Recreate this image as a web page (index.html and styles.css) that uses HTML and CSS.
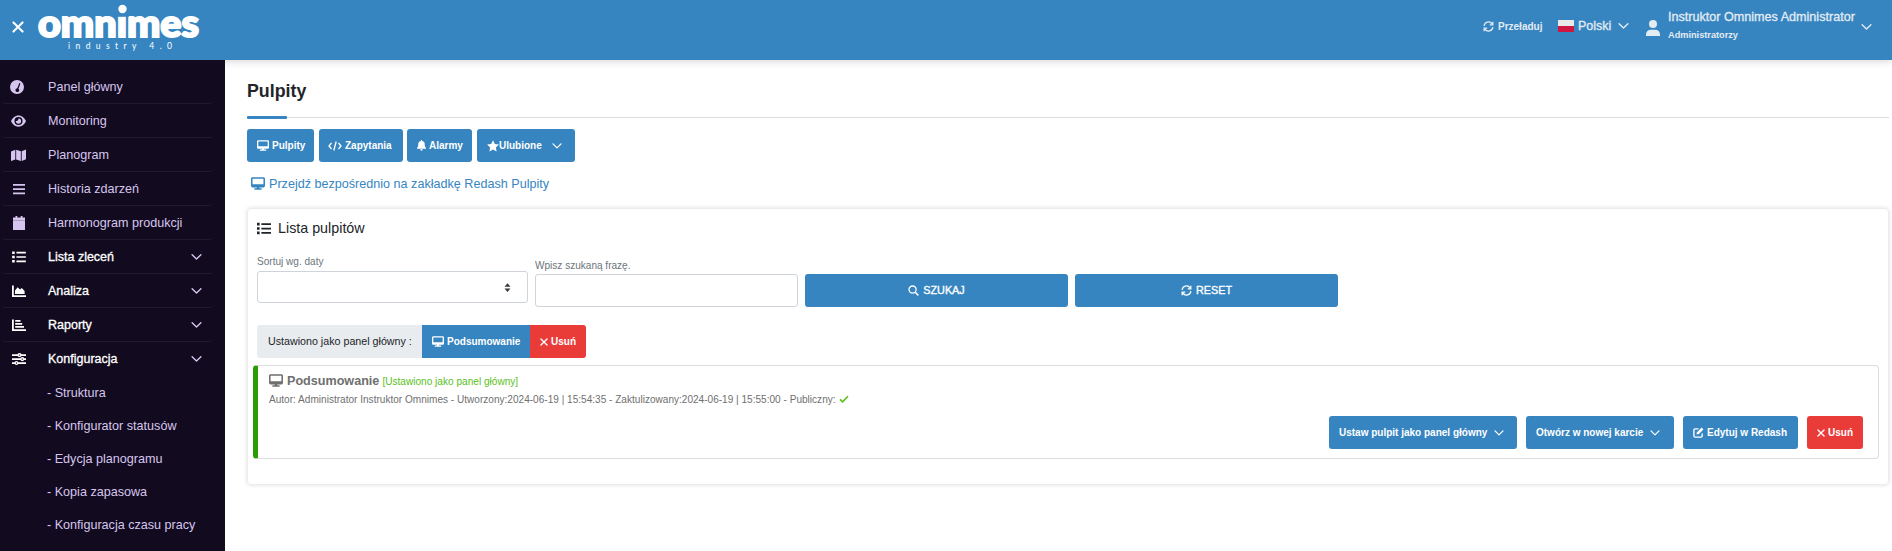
FILE: index.html
```html
<!DOCTYPE html>
<html lang="pl">
<head>
<meta charset="utf-8">
<title>Omnimes - Pulpity</title>
<link rel="stylesheet" href="styles.css">
</head>
<body>
<svg class="defs" aria-hidden="true">
  <symbol id="desktop" viewBox="0 0 576 512"><path d="M64 0C28.700 0 0 28.700 0 64V352c0 35.300 28.700 64 64 64H240l-10.700 32H160c-17.700 0-32 14.300-32 32s14.300 32 32 32H416c17.700 0 32-14.300 32-32s-14.300-32-32-32H346.700L336 416H512c35.300 0 64-28.700 64-64V64c0-35.300-28.700-64-64-64H64zM512 64V288H64V64H512z"/></symbol>
  <symbol id="list" viewBox="0 0 16 14"><path d="M0 .5h3v3H0zM0 5.500h3v3H0zM0 10.500h3v3H0zM5 1h11v2H5zM5 6h11v2H5zM5 11h11v2H5z"/></symbol>
  <symbol id="down" viewBox="0 0 12 8"><path d="M1.200 1.500 6 6.300l4.800-4.800" fill="none" stroke="currentColor" stroke-width="1.500" stroke-linecap="round" stroke-linejoin="round"/></symbol>
  <symbol id="times" viewBox="0 0 10 10"><path d="M1.200 1.200l7.600 7.600M8.800 1.200 1.200 8.800" fill="none" stroke="currentColor" stroke-width="1.700" stroke-linecap="round"/></symbol>
  <symbol id="sync" viewBox="0 0 12 12"><path d="M1.200 5.300A4.800 4.800 0 0 1 9.800 3M10.800 6.700A4.800 4.800 0 0 1 2.200 9M10.700.8v3.400H7.400M1.300 11.200V7.800h3.300" fill="none" stroke="currentColor" stroke-width="1.400"/></symbol>
</svg>

<header class="topbar">
  <svg class="close"><use href="#times"/></svg>
  <svg class="logo" viewBox="0 0 170 60">
    <text class="logo-name" x="3" y="36.500" textLength="161" lengthAdjust="spacingAndGlyphs">omnimes</text>
    <path class="logo-gap" d="M81 3h13v13.800H81z"/>
    <circle cx="87.500" cy="9" r="4.200"/>
    <text class="logo-sub" x="33" y="48.500" textLength="104">industry 4.0</text>
  </svg>
  <div class="reload"><svg><use href="#sync"/></svg><span>Przeładuj</span></div>
  <div class="lang"><i class="flag"></i><span>Polski</span><svg class="chev"><use href="#down"/></svg></div>
  <div class="user">
    <svg class="avatar" viewBox="0 0 14 16"><circle cx="7" cy="4" r="4"/><path d="M0 16v-1.500C0 11.500 2 9.700 5 9.700h4c3 0 5 1.800 5 4.800V16z"/></svg>
    <div><div class="user-name">Instruktor Omnimes Administrator</div><div class="user-role">Administratorzy</div></div>
    <svg class="chev"><use href="#down"/></svg>
  </div>
</header>

<div class="shell">
<nav class="sidebar">
  <a class="nav"><svg viewBox="0 0 14 14"><path fill-rule="evenodd" d="M7 0a7 7 0 1 0 0 14A7 7 0 0 0 7 0zM9.300 3l1.100.5-1.900 5.200a1.900 1.900 0 1 1-1.200-.4z"/></svg><span>Panel główny</span></a>
  <a class="nav"><svg class="wide" viewBox="0 0 16 14"><path fill-rule="evenodd" d="M8 1C4.200 1 1.500 3.700 0 7c1.500 3.300 4.200 6 8 6s6.500-2.700 8-6c-1.500-3.300-4.200-6-8-6zm0 1.700a4.300 4.300 0 1 1 0 8.600 4.300 4.300 0 0 1 0-8.600zm0 1.500c0 1.600-1.200 2.800-2.800 2.800a2.800 2.800 0 1 0 2.800-2.800z"/></svg><span>Monitoring</span></a>
  <a class="nav"><svg class="wide" viewBox="0 0 16 14"><path d="M0 3.200 4.600 1.400v10.300L0 13.400zM5.500 1.400l5 1.700v10.300l-5-1.700zM11.400 3.100 16 1.200v10.400l-4.600 1.800z"/></svg><span>Planogram</span></a>
  <a class="nav"><svg class="bars" viewBox="0 0 12 12"><path d="M0 1h12v1.700H0zM0 5.200h12v1.700H0zM0 9.500h12v1.700H0z"/></svg><span>Historia zdarzeń</span></a>
  <a class="nav"><svg class="bars" viewBox="0 0 12 14"><path d="M2.500 0h1.800v1.500h3.400V0h1.800v1.500H12v2.700H0V1.500h2.500z"/><path d="M0 4h12v1H0z" opacity=".7"/><path d="M0 5h12v9H0z"/></svg><span>Harmonogram produkcji</span></a>
  <a class="nav group"><svg class="listicon"><use href="#list"/></svg><span>Lista zleceń</span><svg class="chev"><use href="#down"/></svg></a>
  <a class="nav group"><svg viewBox="0 0 14 12"><path d="M0 .5h1.800v9.700H14V12H0zM3 9V5.500l2.700-3.300L8 4.500 9.800 3 12.600 6v3z"/></svg><span>Analiza</span><svg class="chev"><use href="#down"/></svg></a>
  <a class="nav group"><svg viewBox="0 0 14 12"><path d="M0 .5h1.800v9.700H14V12H0zM3.200 1h5.300v1.700H3.200zM3.200 4h7v1.700h-7zM3.200 7H12v1.700H3.200z"/></svg><span>Raporty</span><svg class="chev"><use href="#down"/></svg></a>
  <a class="nav group last"><svg viewBox="0 0 14 12"><path d="M0 1.300h14v1.600H0zM0 5.300h14v1.600H0zM0 9.300h14v1.600H0z"/><circle cx="7.500" cy="2.100" r="2.100"/><circle cx="10.300" cy="6.100" r="2.100"/><circle cx="4.500" cy="10" r="2"/><g fill="#120a1e"><circle cx="7.500" cy="2.100" r=".7"/><circle cx="10.300" cy="6.100" r=".7"/><circle cx="4.500" cy="10" r=".7"/></g></svg><span>Konfiguracja</span><svg class="chev"><use href="#down"/></svg></a>
  <a class="sub">- Struktura</a>
  <a class="sub">- Konfigurator statusów</a>
  <a class="sub">- Edycja planogramu</a>
  <a class="sub">- Kopia zapasowa</a>
  <a class="sub">- Konfiguracja czasu pracy</a>
</nav>

<main class="main">
  <h1>Pulpity</h1>
  <div class="rule"><i></i></div>
  <div class="tabs">
    <a class="btn t1"><svg class="desk"><use href="#desktop"/></svg><span>Pulpity</span></a>
    <a class="btn t2"><svg class="code" viewBox="0 0 14 10"><path d="M3.500 2 1 5l2.500 3M10.500 2 13 5l-2.500 3M8.200.5 5.800 9.500" fill="none" stroke="currentColor" stroke-width="1.300"/></svg><span>Zapytania</span></a>
    <a class="btn t3"><svg class="bell" viewBox="0 0 10 12"><path d="M4.300 0h1.400v1.100C7.600 1.400 8.600 2.800 8.600 4.600c0 2.400.5 3.300 1.400 4.100v.8H0v-.8c.9-.8 1.400-1.700 1.400-4.100 0-1.800 1-3.200 2.900-3.500zM3.500 10.300h3a1.500 1.500 0 0 1-3 0z"/></svg><span>Alarmy</span></a>
    <a class="btn t4"><svg class="star" viewBox="0 0 12 12"><path d="M6 .2l1.800 3.700 4.100.6-3 2.900.7 4.100L6 9.600l-3.600 1.900.7-4.100-3-2.900 4.100-.6z"/></svg><span>Ulubione</span><svg class="chev"><use href="#down"/></svg></a>
  </div>
  <a class="direct"><svg><use href="#desktop"/></svg><span>Przejdź bezpośrednio na zakładkę Redash Pulpity</span></a>

  <section class="card">
    <h2><svg><use href="#list"/></svg><span>Lista pulpitów</span></h2>
    <div class="filters">
      <div class="field sort"><label>Sortuj wg. daty</label><div class="select"><svg viewBox="0 0 8 10"><path d="M4 0l3.400 4H.6zM4 10 .6 6h6.800z"/></svg></div></div>
      <div class="field"><label>Wpisz szukaną frazę.</label><div class="input"></div></div>
      <a class="btn big"><svg viewBox="0 0 12 12"><circle cx="5" cy="5" r="3.900" fill="none" stroke="currentColor" stroke-width="1.400"/><path d="M7.900 7.900l3.400 3.400" stroke="currentColor" stroke-width="1.600"/></svg><span>SZUKAJ</span></a>
      <a class="btn big"><svg><use href="#sync"/></svg><span>RESET</span></a>
    </div>
    <div class="current">
      <span class="current-label">Ustawiono jako panel główny :</span>
      <a class="btn mid"><svg class="desk"><use href="#desktop"/></svg><span>Podsumowanie</span></a>
      <a class="btn red end"><svg class="x"><use href="#times"/></svg><span>Usuń</span></a>
    </div>
    <article class="item">
      <div class="item-title"><svg><use href="#desktop"/></svg><b>Podsumowanie</b><span>[Ustawiono jako panel główny]</span></div>
      <div class="meta"><span>Autor: Administrator Instruktor Omnimes - Utworzony:2024-06-19 | 15:54:35 - Zaktulizowany:2024-06-19 | 15:55:00 - Publiczny:</span><svg viewBox="0 0 10 8"><path d="M1 4.300 3.600 6.800 9 1.200" fill="none" stroke="#59c11c" stroke-width="1.600"/></svg></div>
      <div class="actions">
        <a class="btn a1"><span>Ustaw pulpit jako panel główny</span><svg class="chev"><use href="#down"/></svg></a>
        <a class="btn a2"><span>Otwórz w nowej karcie</span><svg class="chev"><use href="#down"/></svg></a>
        <a class="btn a3"><svg class="edit" viewBox="0 0 12 12"><path d="M6 2H2.200C1.500 2 1 2.500 1 3.200v6.600c0 .7.500 1.200 1.200 1.200h6.600c.7 0 1.200-.5 1.200-1.200V7" fill="none" stroke="currentColor" stroke-width="1.500"/><path d="M9.400.6l2 2-5 5-2.600.6.600-2.600z"/></svg><span>Edytuj w Redash</span></a>
        <a class="btn red a4"><svg class="x"><use href="#times"/></svg><span>Usuń</span></a>
      </div>
    </article>
  </section>
</main>
</div>
</body>
</html>
```
FILE: styles.css
```css
* { box-sizing: border-box; }
body { margin: 0; height: 551px; overflow: hidden; background: #fff; font-family: "Liberation Sans", Arial, sans-serif; font-size: 12.5px; color: #212529; }
svg { fill: currentColor; flex: none; display: block; }
span { white-space: nowrap; }
.defs { position: absolute; width: 0; height: 0; }
.chev { width: 11px; height: 8px; }

.topbar { position: relative; z-index: 1; display: flex; align-items: center; height: 60px; background: #3685c1; color: #e3ebf3; box-shadow: 0 1px 8px rgba(0,0,0,.18); }
.close { width: 12px; height: 12px; margin: -6px 0 0 12px; color: #fff; }
.logo { width: 170px; height: 60px; margin-left: 11px; color: #fff; overflow: visible; }
.logo-name { font: 900 37px Lato, sans-serif; stroke: #fff; stroke-width: 2px; }
.logo-gap { fill: #3685c1; }
.logo-sub { font: 400 8.500px Lato, sans-serif; }
.reload { display: flex; align-items: center; width: 75px; margin: -7px 0 0 auto; font-size: 10px; font-weight: bold; }
.reload svg { width: 11px; height: 11px; margin-right: 4px; }
.lang { display: flex; align-items: center; width: 88px; margin-top: -8px; -webkit-text-stroke: .3px; }
.flag { width: 16px; height: 12px; margin-right: 4px; background: linear-gradient(#e9e9e9 50%, #cf173f 50%); }
.lang .chev { margin-left: 7px; }
.user { display: flex; align-items: center; width: 246px; margin-top: -8px; }
.avatar { width: 14px; height: 16px; margin: 3px 8px 0 0; }
.user-name { width: 187px; line-height: 17px; white-space: nowrap; font-size: 12.600px; -webkit-text-stroke: .3px; }
.user-role { font-size: 9.200px; font-weight: bold; line-height: 18px; }
.user .chev { margin-left: 6px; margin-top: 2px; }

.shell { display: flex; height: 491px; }
.sidebar { position: relative; z-index: 2; width: 225px; padding: 10px 0 0 2px; background: #120a1e; color: #d6c6ef; }
.nav { display: flex; align-items: center; width: 211px; height: 34px; padding: 0 11px 0 8px; border-bottom: 1px solid #221a2e; border-radius: 4px; }
.nav > svg:first-child { width: 14px; height: 14px; margin-right: 24px; }
.nav > svg.wide:first-child { width: 15px; margin: 0 22px 0 1px; }
.nav > svg.bars:first-child { width: 12px; margin: 0 23px 0 3px; }
.nav span { font-size: 12.600px; }
.nav.group { color: #fff; }
.nav.group > svg:first-child { height: 12px; margin: 0 22px 0 2px; }
.nav.group span { font-size: 12.500px; -webkit-text-stroke: .3px; }
.nav.group .chev { margin-left: auto; color: #d6c6ef; }
.nav.last { border-color: transparent; }
.sub { display: flex; align-items: center; height: 33px; padding-left: 45px; font-size: 12.600px; }

.main { flex: 1; padding: 20px 3px 0 22px; }
h1 { margin: 0; height: 36px; font-size: 17.800px; line-height: 22px; }
.rule { display: flex; align-items: center; height: 3px; background: linear-gradient(transparent 1px, #dcdcdc 1px, #dcdcdc 2px, transparent 2px); }
.rule i { width: 40px; height: 3px; border-radius: 1px; background: #3685c1; }
.btn { display: flex; align-items: center; height: 33px; border-radius: 3px; background: #3685c1; color: #fff; font-size: 10px; font-weight: bold; }
.tabs { display: flex; margin-top: 10px; }
.desk { width: 12px; height: 11px; margin-right: 3px; }
.t1 { width: 67px; padding-left: 10px; margin-right: 5px; }
.t2 { width: 84px; padding-left: 9px; margin-right: 4px; }
.t3 { width: 65px; padding-left: 10px; margin-right: 5px; }
.t4 { width: 98px; padding-left: 10px; }
.code { width: 14px; height: 10px; margin-right: 3px; }
.bell { width: 9px; height: 11px; margin-right: 3px; }
.star { width: 12px; height: 12px; }
.t4 .chev { width: 10px; margin-left: 10px; }
.direct { display: flex; align-items: center; height: 20px; margin: 12px 0 0 4px; font-size: 12.600px; color: #3685c1; }
.direct svg { width: 14px; height: 13px; margin: -1px 4px 0 0; }

.card { height: 277px; margin-top: 14px; padding: 10px 10px 0; border: 1px solid #ececec; border-radius: 4px; box-shadow: 0 0 4px rgba(0,0,0,.13); }
h2 { display: flex; align-items: center; height: 18px; margin: 0 0 0 -1px; font-size: 14.300px; font-weight: normal; }
h2 svg { width: 14px; height: 13px; margin-right: 7px; }
.filters { display: flex; align-items: flex-end; gap: 7px; height: 70px; margin-left: -1px; }
.field { width: 263px; color: #6c757d; font-size: 10.050px; }
.field label { display: block; height: 14px; line-height: 12px; }
.sort { width: 271px; margin-bottom: 4px; }
.sort label { height: 15px; }
.select, .input { height: 33px; border: 1px solid #ced4da; border-radius: 3px; }
.select { display: flex; align-items: center; justify-content: flex-end; height: 32px; padding-right: 16px; color: #343a40; }
.select svg { width: 7px; height: 9px; }
.big { justify-content: center; width: 263px; padding-bottom: 1px; font-size: 10.800px; font-weight: normal; -webkit-text-stroke: .35px; }
.big svg { width: 11px; height: 11px; margin-right: 4px; }
.current { display: flex; margin: 18px 0 0 -1px; }
.current-label { width: 165px; padding-left: 11px; border-radius: 3px 0 0 3px; background: #e9ecef; font-size: 10.700px; line-height: 33px; }
.mid { width: 108px; padding-left: 10px; border-radius: 0; }
.red { background: #e93c39; }
.x { width: 8px; height: 8px; margin-right: 3px; }
.end { width: 56px; padding-left: 10px; border-radius: 0 3px 3px 0; }
.item { height: 94px; margin: 7px -1px 0 -5px; padding: 6px 15px 0 11px; border: 1px solid #dcdcdc; border-left: 5px solid #2a9c05; border-radius: 4px; color: #6f6f6f; }
.item-title { display: flex; align-items: center; height: 17px; font-size: 12.600px; }
.item-title svg { width: 14px; height: 13px; margin-right: 4px; }
.item-title span { margin: 2px 0 0 3px; color: #59c11c; font-size: 10.100px; }
.meta { display: flex; align-items: center; height: 20px; font-size: 10.050px; letter-spacing: .01px; }
.meta svg { width: 10px; height: 8px; margin-left: 3px; }
.actions { display: flex; justify-content: flex-end; margin-top: 7px; }
.actions .btn { padding-left: 10px; margin-left: 9px; }
.a1 { width: 188px; }
.a2 { width: 148px; }
.a3 { width: 115px; }
.a4 { width: 56px; }
.actions .chev { width: 10px; margin-left: 7px; }
.edit { width: 11px; height: 11px; margin-right: 3px; }
```
